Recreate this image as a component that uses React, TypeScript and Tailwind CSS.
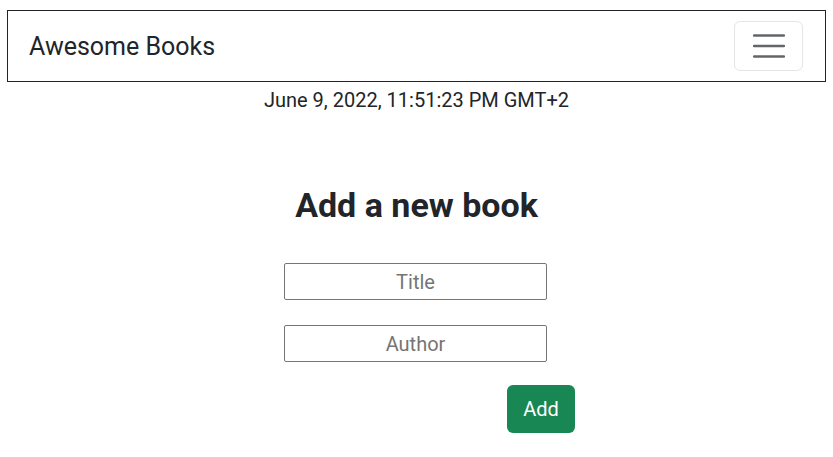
export default function App() {
  return (
    <div className="min-h-[457px] bg-white text-[#212529]" style={{ fontFamily: 'Roboto, "Liberation Sans", sans-serif' }}>
      <nav className="mx-[7px] mt-[10px] flex h-[72px] items-center justify-between border border-[#212529] pl-[21px] pr-[22px]">
        <span className="text-[25px] leading-none">Awesome Books</span>
        <button className="flex h-[50px] w-[69px] items-center justify-center rounded-[6px] border border-[#e5e5e5]">
          <svg width="32" height="32" viewBox="0 0 32 32">
            <path d="M1 5.5h30M1 16h30M1 26.5h30" stroke="rgba(33,37,41,0.7)" strokeWidth="2.5" strokeLinecap="round" />
          </svg>
        </button>
      </nav>
      <p className="mt-[5px] text-center text-[20px] leading-[26px]">June 9, 2022, 11:51:23 PM GMT+2</p>
      <main className="mt-[72px] flex flex-col items-center">
        <h1 className="text-[34px] font-bold leading-[40px]">Add a new book</h1>
        <form className="mr-[2px] mt-[38px] flex flex-col items-center">
          <input
            placeholder="Title"
            className="h-[37px] w-[263px] rounded-[2px] border border-[#767676] text-center text-[20px] placeholder:text-[#757575]"
          />
          <input
            placeholder="Author"
            className="mt-[25px] h-[37px] w-[263px] rounded-[2px] border border-[#767676] text-center text-[20px] placeholder:text-[#757575]"
          />
          <div className="mt-[23px] flex w-[263px] justify-end">
            <button type="button" className="-mr-[28px] h-[48px] w-[68px] rounded-[6px] bg-[#198754] text-[20px] text-white">
              Add
            </button>
          </div>
        </form>
      </main>
    </div>
  )
}
